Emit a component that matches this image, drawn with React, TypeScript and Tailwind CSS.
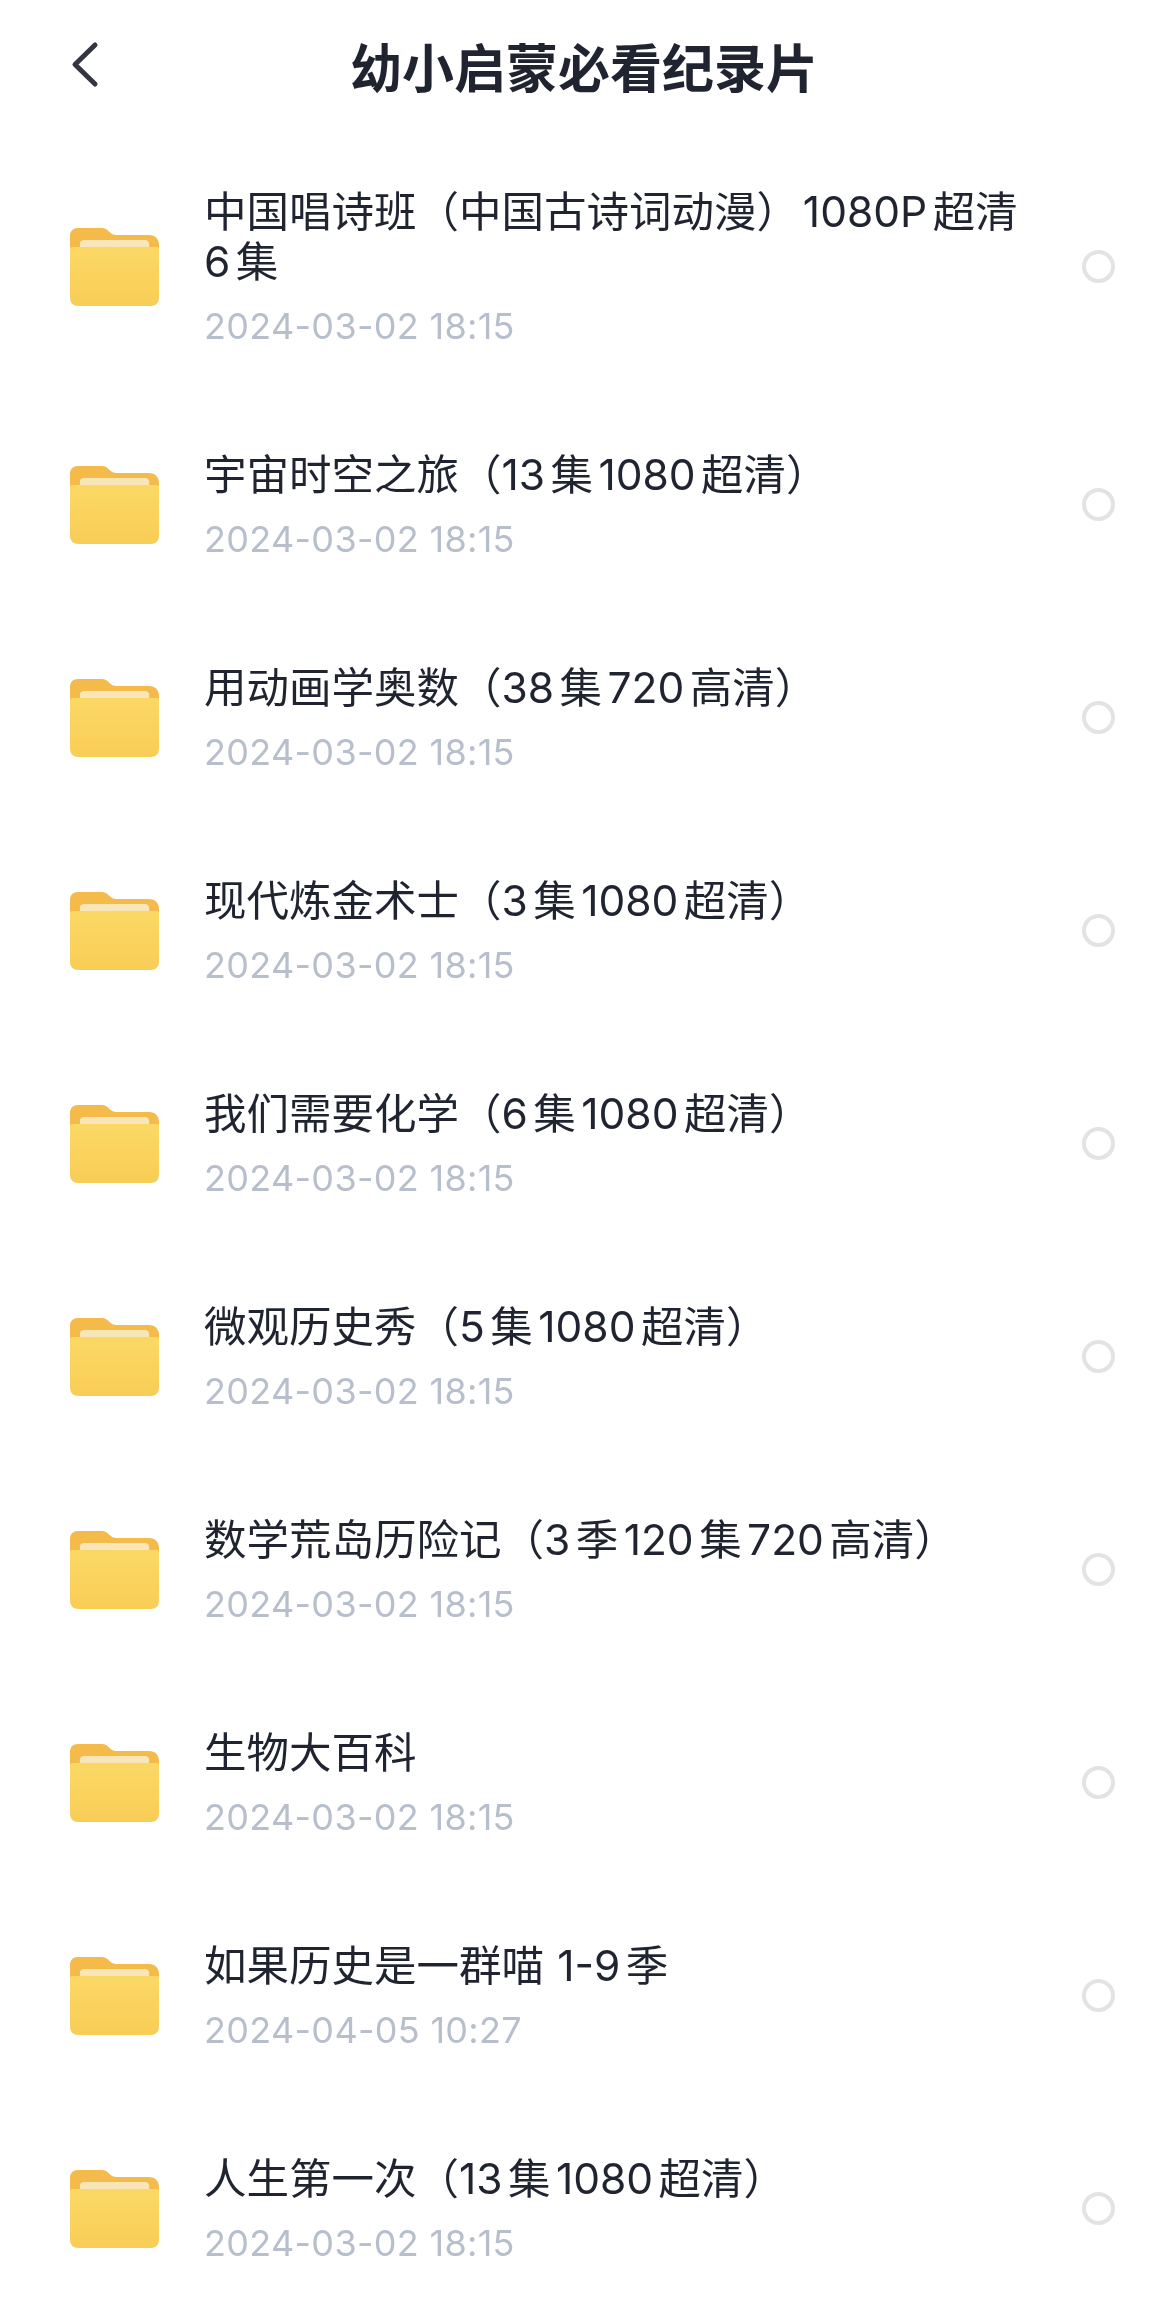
const rows: [string[], string][] = [
  [["中国唱诗班（中国古诗词动漫）\u200A1080P 超清", "6 集"], "2024-03-02 18:15"],
  [["宇宙时空之旅（13 集 1080 超清）"], "2024-03-02 18:15"],
  [["用动画学奥数（38 集 720 高清）"], "2024-03-02 18:15"],
  [["现代炼金术士（3 集 1080 超清）"], "2024-03-02 18:15"],
  [["我们需要化学（6 集 1080 超清）"], "2024-03-02 18:15"],
  [["微观历史秀（5 集 1080 超清）"], "2024-03-02 18:15"],
  [["数学荒岛历险记（3 季 120 集 720 高清）"], "2024-03-02 18:15"],
  [["生物大百科"], "2024-03-02 18:15"],
  [["如果历史是一群喵\u2009 1-9 季"], "2024-04-05 10:27"],
  [["人生第一次（13 集 1080 超清）"], "2024-03-02 18:15"],
];

function Folder({ id }: { id: number }) {
  return (
    <svg width="89" height="78" viewBox="0 0 90 78" preserveAspectRatio="none" className="shrink-0">
      <defs>
        <linearGradient id={`front${id}`} x1="0" y1="0" x2="0" y2="1">
          <stop offset="0" stopColor="#fbd865" />
          <stop offset="1" stopColor="#f8cd56" />
        </linearGradient>
      </defs>
      <path d="M8 0H32C36 0 38 2 40 4C42 6 44 7 47 7H80C86 7 90 11 90 17V40H0V8C0 3 3 0 8 0Z" fill="#f4bb4a" />
      <path d="M10 16C10 13 12 12 14 12H76C78 12 80 13 80 16V22H10Z" fill="#f9e6b8" />
      <path d="M0 21C0 20 1 19 2 19H88C89 19 90 20 90 21V69C90 75 87 78 81 78H9C3 78 0 75 0 69Z" fill={`url(#front${id})`} />
    </svg>
  );
}

export default function App() {
  return (
    <div className="w-[1170px] min-h-[2318px] bg-white text-[#1f2430] font-['Inter','Noto_Sans_CJK_SC',sans-serif] blur-[0.5px]">
      <header className="h-[135px] relative flex justify-center pt-[38px]">
        <svg width="30" height="48" viewBox="0 0 30 48" fill="none" className="absolute left-[70px] top-[41px]">
          <path d="M25 4L5 23.5L25 43" stroke="#33363e" strokeWidth="5" strokeLinecap="round" strokeLinejoin="round" />
        </svg>
        <h1 className="text-[52px] leading-[64px] font-bold -ml-[2px]">幼小启蒙必看纪录片</h1>
      </header>
      {rows.map(([lines, date], i) => (
        <div key={i} className={`flex items-center pl-[70px] pr-[55px] ${i === 0 ? "h-[263px]" : "h-[213px]"}`}>
          <Folder id={i} />
          <div className="ml-[45px] flex-1">
            {lines.map((l) => (
              <div key={l} className="text-[42.5px] leading-[50px] [word-spacing:-6.5px] -translate-y-px">{l}</div>
            ))}
            <div className="mt-[18px] text-[36px] leading-[40px] tracking-[0.3px] text-[#b7bfcc]">{date}</div>
          </div>
          <div className="w-[33px] h-[33px] rounded-full border-[4px] border-[#e3e3e3] shrink-0" />
        </div>
      ))}
    </div>
  );
}
